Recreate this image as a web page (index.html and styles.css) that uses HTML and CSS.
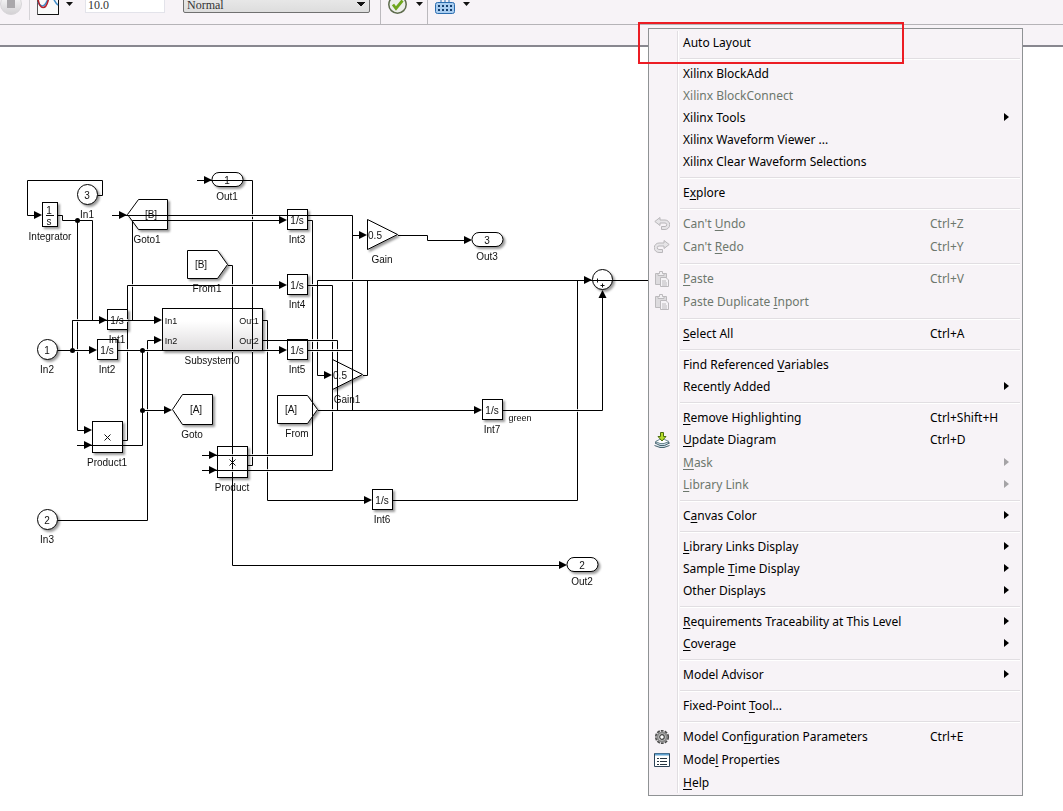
FILE: index.html
```html
<!DOCTYPE html>
<html lang="en">
<head>
    <meta charset="UTF-8">
    <meta name="viewport" content="width=device-width, initial-scale=1.0">
    <title>Model Editor</title>
    <link rel="stylesheet" href="styles.css">
</head>
<body>

    <header class="toolbar">
        <button class="tool stop" aria-label="Stop">
            <svg width="22" height="22" viewBox="0 0 22 22"><defs><linearGradient id="stopFill" x2="0" y2="1"><stop offset="0" stop-color="#fff"/><stop offset="1" stop-color="#d2d0d3"/></linearGradient></defs><circle cx="11" cy="11" r="10.5" fill="url(#stopFill)" stroke="#d8d6d9"/><rect x="7" y="6" width="8" height="9" fill="#aaa8ab"/></svg>
        </button>
        <span class="divider short"></span>
        <button class="tool scope" aria-label="Simulation Data Inspector">
            <svg width="22" height="22" viewBox="0 0 22 22"><rect x=".5" y=".5" width="21" height="21" fill="#fafafa" stroke="#555"/><path d="M1 21.5h20.5V1" fill="none" stroke="#111"/><path d="M1 9c2 5 6 5 8 1s5-8 7-5 3 6 5 7" fill="none" stroke="#3f8bc8" stroke-width="1.5"/><path d="M1 6c2 12 8 10 10 2s5-4 10-4" fill="none" stroke="#b3202c" stroke-width="1.5"/></svg>
        </button>
        <button class="caret" aria-label="Inspector options"></button>
        <input class="stop-time" type="text" value="10.0" aria-label="Stop time">
        <select class="mode" aria-label="Simulation mode">
            <option>Normal</option>
        </select>
        <span class="divider after-mode"></span>
        <button class="tool check" aria-label="Check model">
            <svg width="19" height="19" viewBox="0 0 19 19"><circle cx="9.5" cy="9.5" r="8.7" fill="#eceeea" stroke="#5d6b4c" stroke-width="1.5"/><path d="M5 9.500l3 4 6.500-8" fill="none" stroke="#6ea61c" stroke-width="2.800"/></svg>
        </button>
        <button class="caret" aria-label="Check options"></button>
        <span class="divider"></span>
        <button class="tool build" aria-label="Build model">
            <svg width="20" height="20" viewBox="0 0 20 20"><rect x=".5" y="8.500" width="19" height="11" rx="2" fill="#a9cdf0" stroke="#2a6cae"/><path d="M3 12h14M3 16h14" stroke="#16406f" stroke-width="2" stroke-dasharray="2 2"/><path d="M6 6v2M10 6v2M14 6v2" stroke="#2a6cae"/></svg>
        </button>
        <button class="caret" aria-label="Build options"></button>
    </header>
    <div class="path-bar"></div>

    <main class="canvas">
        <svg class="model" width="648" height="764" viewBox="0 47 648 764" role="img" aria-label="Block diagram">
            <defs>
                <linearGradient id="subFill" x2="0" y2="1">
                    <stop offset="0.300" stop-color="#fff"/>
                    <stop offset="1" stop-color="#dedcdd"/>
                </linearGradient>
                <path id="arrow" d="M0 0l-8-4v8z"/>
                <rect id="int" width="20" height="20"/>
                <rect id="port" width="31" height="14" rx="7"/>
                <!-- gap left where two signals cross -->
                <g id="hop"><path class="gap" d="M0-1.500v3"/><path class="wire" d="M-2 0h4"/></g>
            </defs>

            <g class="blocks">
                <rect x="42.500" y="202.500" width="15" height="24"/>
                <circle cx="87.500" cy="194.500" r="10"/>
                <circle cx="47.500" cy="349.500" r="10"/>
                <circle cx="47.500" cy="519.500" r="10"/>
                <circle cx="602.500" cy="279.500" r="10"/>
                <path d="M127.500 214.500l11-15h29v30h-29z"/>
                <path d="M172.500 409.500l10-15h30v30h-30z"/>
                <path d="M187.500 250.500h30l10 14-10 14h-30z"/>
                <path d="M277.500 395.500h30l10 14-10 14h-30z"/>
                <path d="M367.500 219.500l30 15-30 15z"/>
                <path d="M332.500 359.500l30 15-30 15z"/>
                <rect x="162.500" y="308.500" width="100" height="42" fill="url(#subFill)"/>
                <rect x="92.500" y="421.500" width="30" height="31"/>
                <rect x="217.500" y="446.500" width="30" height="31"/>
                <use href="#int" x="107.500" y="309.500"/>
                <use href="#int" x="97.500" y="339.500"/>
                <use href="#int" x="287.500" y="209.500"/>
                <use href="#int" x="287.500" y="274.500"/>
                <use href="#int" x="287.500" y="339.500"/>
                <use href="#int" x="372.500" y="489.500"/>
                <use href="#int" x="482.500" y="399.500"/>
                <use href="#port" x="212" y="172.500"/>
                <use href="#port" x="472" y="232.500"/>
                <use href="#port" x="567" y="557.500"/>
            </g>

            <g class="names">
                <text x="50" y="240">Integrator</text>
                <text x="87" y="218">In1</text>
                <text x="147" y="243">Goto1</text>
                <text x="227" y="200">Out1</text>
                <text x="207" y="292">From1</text>
                <text x="297" y="243">Int3</text>
                <text x="297" y="308">Int4</text>
                <text x="297" y="373">Int5</text>
                <text x="382" y="263">Gain</text>
                <text x="487" y="260">Out3</text>
                <text x="117" y="343">Int1</text>
                <text x="107" y="373">Int2</text>
                <text x="47" y="373">In2</text>
                <text x="212" y="364">Subsystem0</text>
                <text x="347" y="403">Gain1</text>
                <text x="297" y="437">From</text>
                <text x="192" y="438">Goto</text>
                <text x="107" y="466">Product1</text>
                <text x="232" y="491">Product</text>
                <text x="492" y="433">Int7</text>
                <text class="signal" x="520" y="421">green</text>
                <text x="382" y="523">Int6</text>
                <text x="47" y="543">In3</text>
                <text x="582" y="585">Out2</text>
            </g>

            <g class="values">
                <text x="49" y="214">1</text>
                <text x="49" y="225">s</text>
                <text x="87" y="199">3</text>
                <text x="47" y="354">1</text>
                <text x="47" y="524">2</text>
                <text x="227" y="184">1</text>
                <text x="487" y="244">3</text>
                <text x="582" y="569">2</text>
                <text x="151" y="218">[B]</text>
                <text x="201" y="268">[B]</text>
                <text x="196" y="413">[A]</text>
                <text x="291" y="413">[A]</text>
                <text x="375" y="239">0.5</text>
                <text x="340" y="379">0.5</text>
                <text x="117" y="324">1/s</text>
                <text x="107" y="354">1/s</text>
                <text x="297" y="224">1/s</text>
                <text x="297" y="289">1/s</text>
                <text x="297" y="354">1/s</text>
                <text x="382" y="504">1/s</text>
                <text x="492" y="414">1/s</text>
                <text class="signal" x="171" y="324">In1</text>
                <text class="signal" x="171" y="344">In2</text>
                <text class="signal" x="249" y="324">Out1</text>
                <text class="signal" x="249" y="344">Out2</text>
            </g>
            <path class="sign" d="M46 215.500h8M104.500 434.500l6 6m0-6l-6 6M229.500 459.500l6 6m0-6l-6 6M597.500 278.500v4M600.500 285.500h4m-2-2v4"/>

            <g class="wires">
                <path class="wire" d="M98 195.500h4.500v-15h-75v35H36"/>
                <path class="wire" d="M58 215.500h4.500v5h30v100M77.500 220.500v210H86"/>
                <path class="wire" d="M112 215.500H352.500v195M352.500 235.500H361"/>
                <path class="wire" d="M132.500 320.500v-100H281M123 440.500h4.500v-155H281"/>
                <path class="wire" d="M197 180.500h55.500v285H248"/>
                <path class="wire" d="M308 220.500h4.500v235H202M308 285.500h24.500v185H202"/>
                <path class="wire" d="M228 265.500h4.500v300H561"/>
                <path class="wire" d="M398 235.500h29.500v5H466"/>
                <path class="wire" d="M363 375.500h4.500v-95M326 375.500h-8.500v-95H648M577.500 280.500v220H393"/>
                <path class="wire" d="M58 350.500H91M101 320.500H72.500v30M72.500 320.500H156M118 350.500H281M308 350.500h44.500"/>
                <path class="wire" d="M142.500 350.500v95H77M142.500 410.500H166M58 520.500h89.500v-180H156"/>
                <path class="wire" d="M263 320.500h4.500v180H366M263 340.500h74.500v70"/>
                <path class="wire" d="M318 410.500H476M503 410.500h99.500V296"/>
                <use href="#hop" x="252.500" y="215.500"/><use href="#hop" x="252.500" y="220.500"/>
                <use href="#hop" x="132.500" y="285.500"/><use href="#hop" x="232.500" y="285.500"/>
                <use href="#hop" x="252.500" y="285.500"/><use href="#hop" x="312.500" y="285.500"/>
                <use href="#hop" x="352.500" y="280.500"/>
                <use href="#hop" x="77.500" y="320.500"/><use href="#hop" x="127.500" y="320.500"/>
                <use href="#hop" x="77.500" y="350.500"/><use href="#hop" x="127.500" y="350.500"/>
                <use href="#hop" x="147.500" y="350.500"/><use href="#hop" x="147.500" y="410.500"/>
                <use href="#hop" x="232.500" y="350.500"/><use href="#hop" x="252.500" y="350.500"/>
                <use href="#hop" x="267.500" y="350.500"/><use href="#hop" x="312.500" y="340.500"/>
                <use href="#hop" x="317.500" y="340.500"/><use href="#hop" x="332.500" y="340.500"/>
                <use href="#hop" x="312.500" y="350.500"/><use href="#hop" x="317.500" y="350.500"/>
                <use href="#hop" x="332.500" y="350.500"/><use href="#hop" x="337.500" y="350.500"/>
                <use href="#hop" x="332.500" y="410.500"/><use href="#hop" x="577.500" y="410.500"/>
                <use href="#hop" x="232.500" y="455.500"/><use href="#hop" x="252.500" y="455.500"/>
                <use href="#hop" x="267.500" y="455.500"/><use href="#hop" x="232.500" y="470.500"/>
                <use href="#hop" x="267.500" y="470.500"/>
                <circle cx="77.500" cy="220.500" r="2.500"/>
                <circle cx="72.500" cy="350.500" r="2.500"/>
                <circle cx="142.500" cy="350.500" r="2.500"/>
                <circle cx="142.500" cy="410.500" r="2.500"/>
                <use href="#arrow" x="42" y="215"/>
                <use href="#arrow" x="127" y="215"/>
                <use href="#arrow" x="212" y="180"/>
                <use href="#arrow" x="287" y="220"/>
                <use href="#arrow" x="287" y="285"/>
                <use href="#arrow" x="287" y="350"/>
                <use href="#arrow" x="367" y="235"/>
                <use href="#arrow" x="472" y="240"/>
                <use href="#arrow" x="592" y="280"/>
                <use href="#arrow" x="332" y="375"/>
                <use href="#arrow" x="107" y="320"/>
                <use href="#arrow" x="162" y="320"/>
                <use href="#arrow" x="162" y="340"/>
                <use href="#arrow" x="97" y="350"/>
                <use href="#arrow" x="172" y="410"/>
                <use href="#arrow" x="92" y="430"/>
                <use href="#arrow" x="92" y="445"/>
                <use href="#arrow" x="217" y="455"/>
                <use href="#arrow" x="217" y="470"/>
                <use href="#arrow" x="372" y="500"/>
                <use href="#arrow" x="482" y="410"/>
                <use href="#arrow" x="567" y="565"/>
                <path d="M602.500 290l-4 8h8z"/>
            </g>
        </svg>
    </main>

    <nav class="menu" aria-label="Context menu">
        <div class="group">
            <button class="item"><span class="label">Auto Layout</span></button>
        </div>
        <div class="group">
            <button class="item"><span class="label">Xilinx BlockAdd</span></button>
            <button class="item" disabled><span class="label">Xilinx BlockConnect</span></button>
            <button class="item sub"><span class="label">Xilinx Tools</span></button>
            <button class="item"><span class="label">Xilinx Waveform Viewer ...</span></button>
            <button class="item"><span class="label">Xilinx Clear Waveform Selections</span></button>
        </div>
        <div class="group">
            <button class="item"><span class="label">E<u>x</u>plore</span></button>
        </div>
        <div class="group">
            <button class="item tall" disabled>
                <svg class="icon" viewBox="0 0 16 16"><path d="M.8 5.500L6 1.500v2.500h5a4.300 4.300 0 0 1 0 9.500H7.500V10.500H11a1.500 1.500 0 0 0 0-3.500H6v2.500z" fill="#e6e4e7" stroke="#b9b7ba"/></svg>
                <span class="label">Can't <u>U</u>ndo</span><span class="keys">Ctrl+Z</span>
            </button>
            <button class="item tall" disabled>
                <svg class="icon" viewBox="0 0 16 16"><path d="M15.200 5.500L10 1.500v2.500H5a4.300 4.300 0 0 0 0 9.500h3.500V10.500H5a1.500 1.500 0 0 1 0-3.500h5v2.500z" fill="#e6e4e7" stroke="#b9b7ba"/></svg>
                <span class="label">Can't <u>R</u>edo</span><span class="keys">Ctrl+Y</span>
            </button>
        </div>
        <div class="group">
            <button class="item tall" disabled>
                <svg class="icon" viewBox="0 0 16 16"><path d="M1.500 2.500h11v11h-11z" fill="#dddbde" stroke="#bcbabd"/><path d="M4 4.500v-2h1.500V.5h3v2H10v2z" fill="#f2f0f3" stroke="#bcbabd"/><path d="M6.500 6.500H12l2.500 2.500v6.500h-8z" fill="#f5f3f6" stroke="#bcbabd"/><path d="M8 10h4M8 12h5M8 14h5" stroke="#bcbabd"/></svg>
                <span class="label"><u>P</u>aste</span><span class="keys">Ctrl+V</span>
            </button>
            <button class="item tall" disabled>
                <svg class="icon" viewBox="0 0 16 16"><path d="M1.500 2.500h11v11h-11z" fill="#dddbde" stroke="#bcbabd"/><path d="M4 4.500v-2h1.500V.5h3v2H10v2z" fill="#f2f0f3" stroke="#bcbabd"/><path d="M6.500 6.500H12l2.500 2.500v6.500h-8z" fill="#f5f3f6" stroke="#bcbabd"/><path d="M8 10h4M8 12h5M8 14h5" stroke="#bcbabd"/></svg>
                <span class="label">Paste Duplicate <u>I</u>nport</span>
            </button>
        </div>
        <div class="group">
            <button class="item"><span class="label"><u>S</u>elect All</span><span class="keys">Ctrl+A</span></button>
        </div>
        <div class="group">
            <button class="item"><span class="label">Find Referenced <u>V</u>ariables</span></button>
            <button class="item sub"><span class="label">Recently Added</span></button>
        </div>
        <div class="group">
            <button class="item"><span class="label"><u>R</u>emove Highlighting</span><span class="keys">Ctrl+Shift+H</span></button>
            <button class="item tall">
                <svg class="icon" viewBox="0 0 16 16"><path d="M1 11l3-2h8l3.500 2-5 2.500H6zM.5 13.500L6 15.500h4l5.500-2" fill="#c9dbe4" stroke="#4a6570"/><path d="M1.500 9.500l4-2h5l4.500 2-5 2H6z" fill="#fff" stroke="#6d8791"/><path d="M6.500.5h3v4h2.500L8 9 4 4.500h2.500z" fill="#b5dc2a" stroke="#4c6e10"/></svg>
                <span class="label"><u>U</u>pdate Diagram</span><span class="keys">Ctrl+D</span>
            </button>
            <button class="item sub" disabled><span class="label"><u>M</u>ask</span></button>
            <button class="item sub" disabled><span class="label"><u>L</u>ibrary Link</span></button>
        </div>
        <div class="group">
            <button class="item sub"><span class="label">C<u>a</u>nvas Color</span></button>
        </div>
        <div class="group">
            <button class="item sub"><span class="label"><u>L</u>ibrary Links Display</span></button>
            <button class="item sub"><span class="label">Sample <u>T</u>ime Display</span></button>
            <button class="item sub"><span class="label">Other Displays</span></button>
        </div>
        <div class="group">
            <button class="item sub"><span class="label"><u>R</u>equirements Traceability at This Level</span></button>
            <button class="item sub"><span class="label"><u>C</u>overage</span></button>
        </div>
        <div class="group">
            <button class="item sub"><span class="label">Model Advisor</span></button>
        </div>
        <div class="group">
            <button class="item"><span class="label">Fixed-Point <u>T</u>ool...</span></button>
        </div>
        <div class="group">
            <button class="item tall">
                <svg class="icon" viewBox="0 0 16 16"><circle cx="8" cy="8" r="6.200" fill="none" stroke="#4b4b4b" stroke-width="1.800" stroke-dasharray="2.800 1.100"/><circle cx="8" cy="8" r="4.600" fill="#d4d4d4" stroke="#8a8a8a" stroke-width="2"/><circle cx="8" cy="8" r="2.300" fill="#fff" stroke="#444" stroke-width="1.200"/></svg>
                <span class="label">Model Con<u>f</u>iguration Parameters</span><span class="keys">Ctrl+E</span>
            </button>
            <button class="item tall">
                <svg class="icon" viewBox="0 0 16 16"><path d="M.5 1.500h15v13H.5z" fill="#fff" stroke="#2c4358"/><path d="M1 2.500h14" stroke="#5ea0cf" stroke-width="2"/><path d="M3 6.500h2M3 9.500h2M3 12.500h2M6 6.500h7M6 9.500h7M6 12.500h7" stroke="#26333f"/></svg>
                <span class="label">Mode<u>l</u> Properties</span>
            </button>
            <button class="item"><span class="label"><u>H</u>elp</span></button>
        </div>
    </nav>
    <div class="highlight"></div>

</body>
</html>
```

FILE: styles.css
```css
* { box-sizing: border-box; }
body { margin: 0; min-height: 100vh; background: #fff; font-family: "Noto Sans", "Open Sans", sans-serif; font-size: 12px; overflow: hidden; }
button { border: 0; padding: 0; background: none; font: inherit; color: inherit; }
svg { display: block; }

/* toolbar */
.toolbar { display: flex; align-items: flex-end; height: 25px; overflow: hidden; background: #f7f3f7; border-bottom: 1px solid #b5b3b7; }
.tool { flex: none; margin-bottom: 9px; }
.check, .build { margin-bottom: 10px; }
.build { margin-left: 7px; }
.divider { width: 1px; height: 24px; background: #bbb9bd; }
.short { margin: 0 7px 4px; background: #d5d3d7; }
.after-mode { margin: 0 7px 0 10px; }
.caret { width: 7px; height: 4px; margin: 0 4px 18px 9px; background: #111; clip-path: polygon(0 0, 100% 0, 50% 100%); }
.scope + .caret { margin: 0 12px 18px 7px; }
.build + .caret { margin-left: 8px; }
.stop-time, .mode { height: 22px; margin-bottom: 11px; font-family: "Liberation Serif", serif; font-size: 12px; color: #333; }
.stop-time { width: 80px; padding: 6px 2px 0; border: 1px solid #e3e3ea; background: #fff; }
/* the two small gradients are the halves of the drop-down arrow */
.mode {
    width: 187px; margin-left: 18px; padding: 6px 3px 0; appearance: none; border: 1px solid #707070; border-radius: 2px;
    background:
        linear-gradient(45deg, transparent 50%, #111 50%) right 8px top 10px / 4px 4px no-repeat,
        linear-gradient(315deg, transparent 50%, #111 50%) right 4px top 10px / 4px 4px no-repeat,
        linear-gradient(#eee, #ddd);
}
.path-bar { height: 22px; background: #f7f3f7; border-bottom: 2px solid #88878f; }

/* block diagram */
.canvas { overflow: hidden; }
.model { font-family: "Liberation Sans", Arial, sans-serif; font-size: 10px; }
.blocks { fill: #fff; stroke: #000; filter: drop-shadow(2px 2px 1px rgba(0, 0, 0, 0.4)); }
.names, .values { fill: #111; text-anchor: middle; }
.signal { font-size: 9px; }
.wire { fill: none; stroke: #000; }
.gap { stroke: #fff; opacity: 0.8; }
.sign { fill: none; stroke: #111; }

/* context menu */
.menu { position: absolute; left: 648px; top: 28px; width: 375px; padding: 2px; border: 1px solid #8f9294; color: #000; background: linear-gradient(90deg, #e1dee2 1px, #fff 1px, #fff 2px, transparent 2px) 28px 2px / calc(100% - 28px) calc(100% - 4px) no-repeat #f7f3f7; }
.group + .group::before { content: ""; display: block; height: 2px; margin: 5px 0 2px 29px; background: linear-gradient(#e1dee2 50%, #fff 50%); }
.item { display: grid; grid-template-columns: 24px 1fr 74px 16px; align-items: center; width: 100%; height: 22px; text-align: left; white-space: nowrap; }
.tall { height: 23px; }
.item:disabled { color: #6d776d; }
.icon { grid-column: 1; width: 16px; height: 16px; margin-left: 3px; }
.label { grid-column: 2; grid-row: 1; padding-left: 8px; }
.keys { grid-column: 3; }
.sub::after { content: ""; grid-column: 4; width: 5px; height: 8px; background: currentColor; clip-path: polygon(0 0, 100% 50%, 0 100%); }
.sub:disabled::after { background: #a5a3a6; }
.item u { text-underline-offset: 2px; }
.highlight { position: absolute; left: 638px; top: 22px; width: 266px; height: 42px; border: 2px solid #ec1c24; pointer-events: none; }
```
